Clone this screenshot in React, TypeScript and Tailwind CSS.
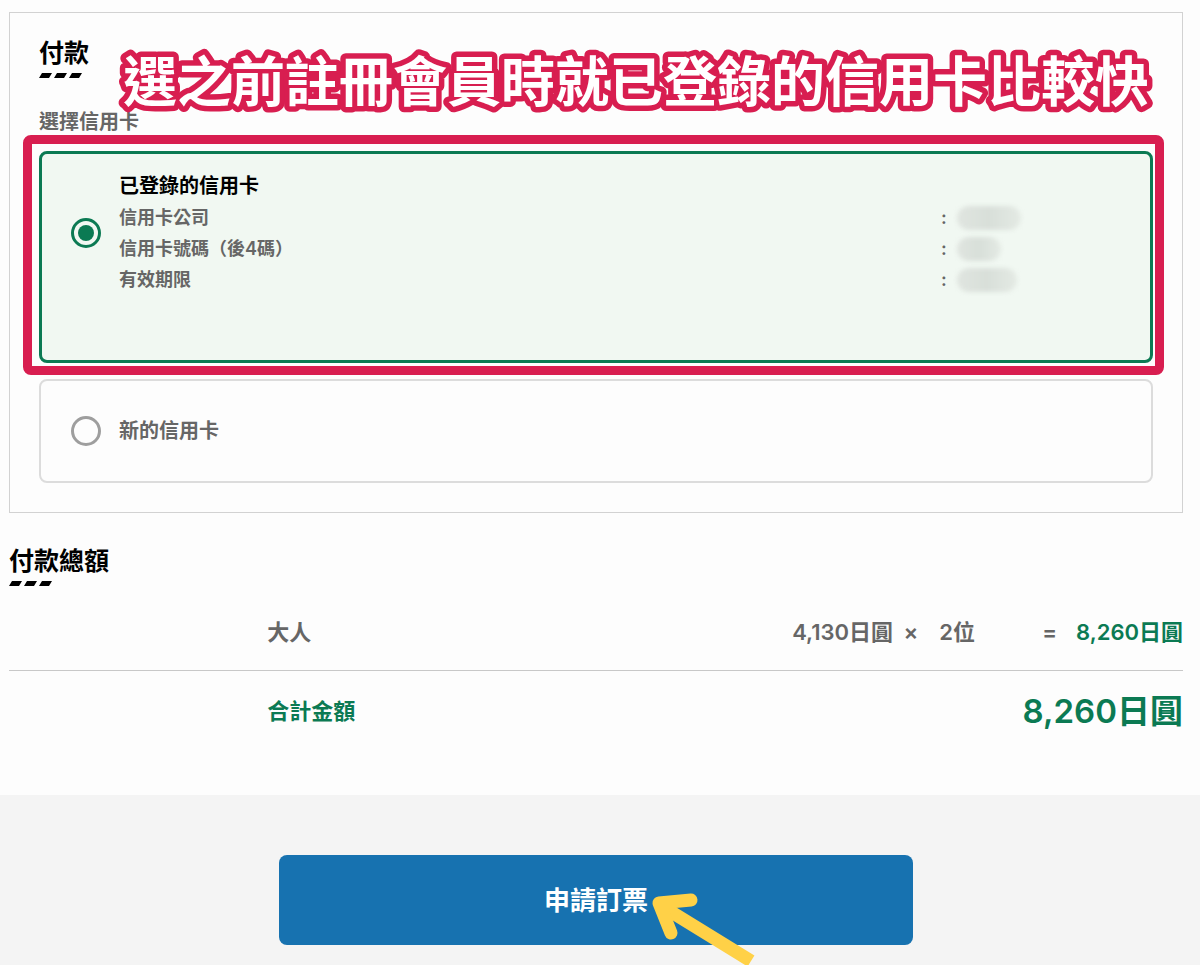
import { useState } from 'react';

const cardDetails = [
  { label: '信用卡公司', width: 'w-16' },
  { label: '信用卡號碼（後4碼）', width: 'w-11' },
  { label: '有效期限', width: 'w-15' },
];

const radioClass =
  'appearance-none shrink-0 w-[30px] h-[30px] rounded-full border-3 border-[#9e9e9e] p-1 bg-clip-content checked:border-[#0b7a53] checked:bg-[#0b7a53] cursor-pointer';

function SectionTitle({ children }: { children: string }) {
  return (
    <div>
      <h2 className="text-[25px] leading-8 font-bold text-black">{children}</h2>
      <svg width="44" height="5" viewBox="0 0 44 5" className="block mt-1" aria-hidden="true">
        <path d="M3 0H13L10 5H0ZM18 0H28L25 5H15ZM33 0H43L40 5H30Z" fill="#000" />
      </svg>
    </div>
  );
}

export default function App() {
  const [card, setCard] = useState('saved');

  return (
    <div className="min-h-screen flex flex-col bg-[#fdfdfd] text-[#666] font-semibold font-['Inter','Noto_Sans_CJK_TC',sans-serif]">
      <main className="pl-[9px] pr-[17px] pt-3 pb-11">
        <section className="relative border border-[#d2d2d2] px-[29px] pt-6 pb-[29px]">
          <SectionTitle>付款</SectionTitle>
          <p id="card-label" className="mt-[28px] text-xl leading-8">選擇信用卡</p>

          <div role="radiogroup" aria-labelledby="card-label" className="mt-[13px] space-y-4">
            <div className="relative">
              <label className="flex border-3 border-[#0b7a53] rounded-lg bg-[#f1f8f2] px-[29px] pt-4 pb-[65px] cursor-pointer">
                <span className="flex flex-1 items-center gap-[18px]">
                  <input
                    type="radio"
                    name="card"
                    checked={card === 'saved'}
                    onChange={() => setCard('saved')}
                    className={radioClass}
                  />
                  <span className="flex-1">
                    <span className="block text-xl leading-8 font-bold text-black">已登錄的信用卡</span>
                    {cardDetails.map((item) => (
                      <span key={item.label} className="flex items-center text-lg leading-[31px]">
                        <span className="flex-1">{item.label}</span>
                        <span className="flex w-[180px] items-center gap-[10px]">
                          <span>:</span>
                          <span
                            className={`${item.width} h-6 rounded-xl bg-linear-to-r from-[#e0e5e0] via-[#d8dfd9] to-[#e4eae4] blur-[2px]`}
                          />
                        </span>
                      </span>
                    ))}
                  </span>
                </span>
              </label>
              <div className="absolute -top-4 -left-4 -right-[11px] -bottom-3 border-9 border-[#d81e50] rounded-lg pointer-events-none" />
            </div>

            <label className="flex items-center gap-[18px] border-2 border-[#dcdcdc] rounded-lg px-[30px] py-[34px] cursor-pointer">
              <input
                type="radio"
                name="card"
                checked={card === 'new'}
                onChange={() => setCard('new')}
                className={radioClass}
              />
              <span className="text-xl leading-8">新的信用卡</span>
            </label>
          </div>

          <svg
            className="absolute top-9 left-[110px] overflow-visible pointer-events-none font-['Noto_Sans_CJK_TC',sans-serif]"
            width="1036"
            height="64"
          >
            <text
              x="3"
              y="53"
              fontSize="54"
              fontWeight="700"
              fill="#fff"
              stroke="#d81e50"
              strokeWidth="11"
              strokeLinejoin="round"
              paintOrder="stroke"
            >
              選之前註冊會員時就已登錄的信用卡比較快
            </text>
          </svg>
        </section>

        <section className="mt-8">
          <SectionTitle>付款總額</SectionTitle>
          <table className="w-full mt-2">
            <tbody>
              <tr className="border-b border-[#c8c8c8] text-[22px] leading-8">
                <th scope="row" className="w-[22%]" />
                <td className="py-[22px]">大人</td>
                <td className="text-right">4,130日圓</td>
                <td className="w-9 text-center">×</td>
                <td className="w-[46px] text-right whitespace-nowrap">2位</td>
                <td className="w-[82px] text-right">=</td>
                <td className="w-[126px] text-right whitespace-nowrap text-[#0b7a53]">8,260日圓</td>
              </tr>
              <tr className="text-[#0b7a53]">
                <th scope="row" />
                <td className="text-[22px] leading-8">合計金額</td>
                <td colSpan={5} className="py-4 text-right text-[33px] leading-12">8,260日圓</td>
              </tr>
            </tbody>
          </table>
        </section>
      </main>

      <footer className="flex-1 bg-[#f4f4f4] pl-[9px] pr-[17px] pt-15 pb-5">
        <div className="relative w-full max-w-[634px] mx-auto">
          <button
            type="button"
            className="w-full h-[90px] rounded-lg bg-[#1772b0] text-white text-[26px] font-bold cursor-pointer"
          >
            申請訂票
          </button>
          <svg
            className="absolute left-1/2 top-9 ml-[54px] pointer-events-none"
            width="108"
            height="75"
            viewBox="0 0 108 75"
            fill="none"
            stroke="#ffd147"
            strokeWidth="13"
            aria-hidden="true"
          >
            <path d="M101 70L10 14" />
            <path d="M41 9L9 12L21 42" strokeLinecap="round" strokeLinejoin="round" />
          </svg>
        </div>
      </footer>
    </div>
  );
}
